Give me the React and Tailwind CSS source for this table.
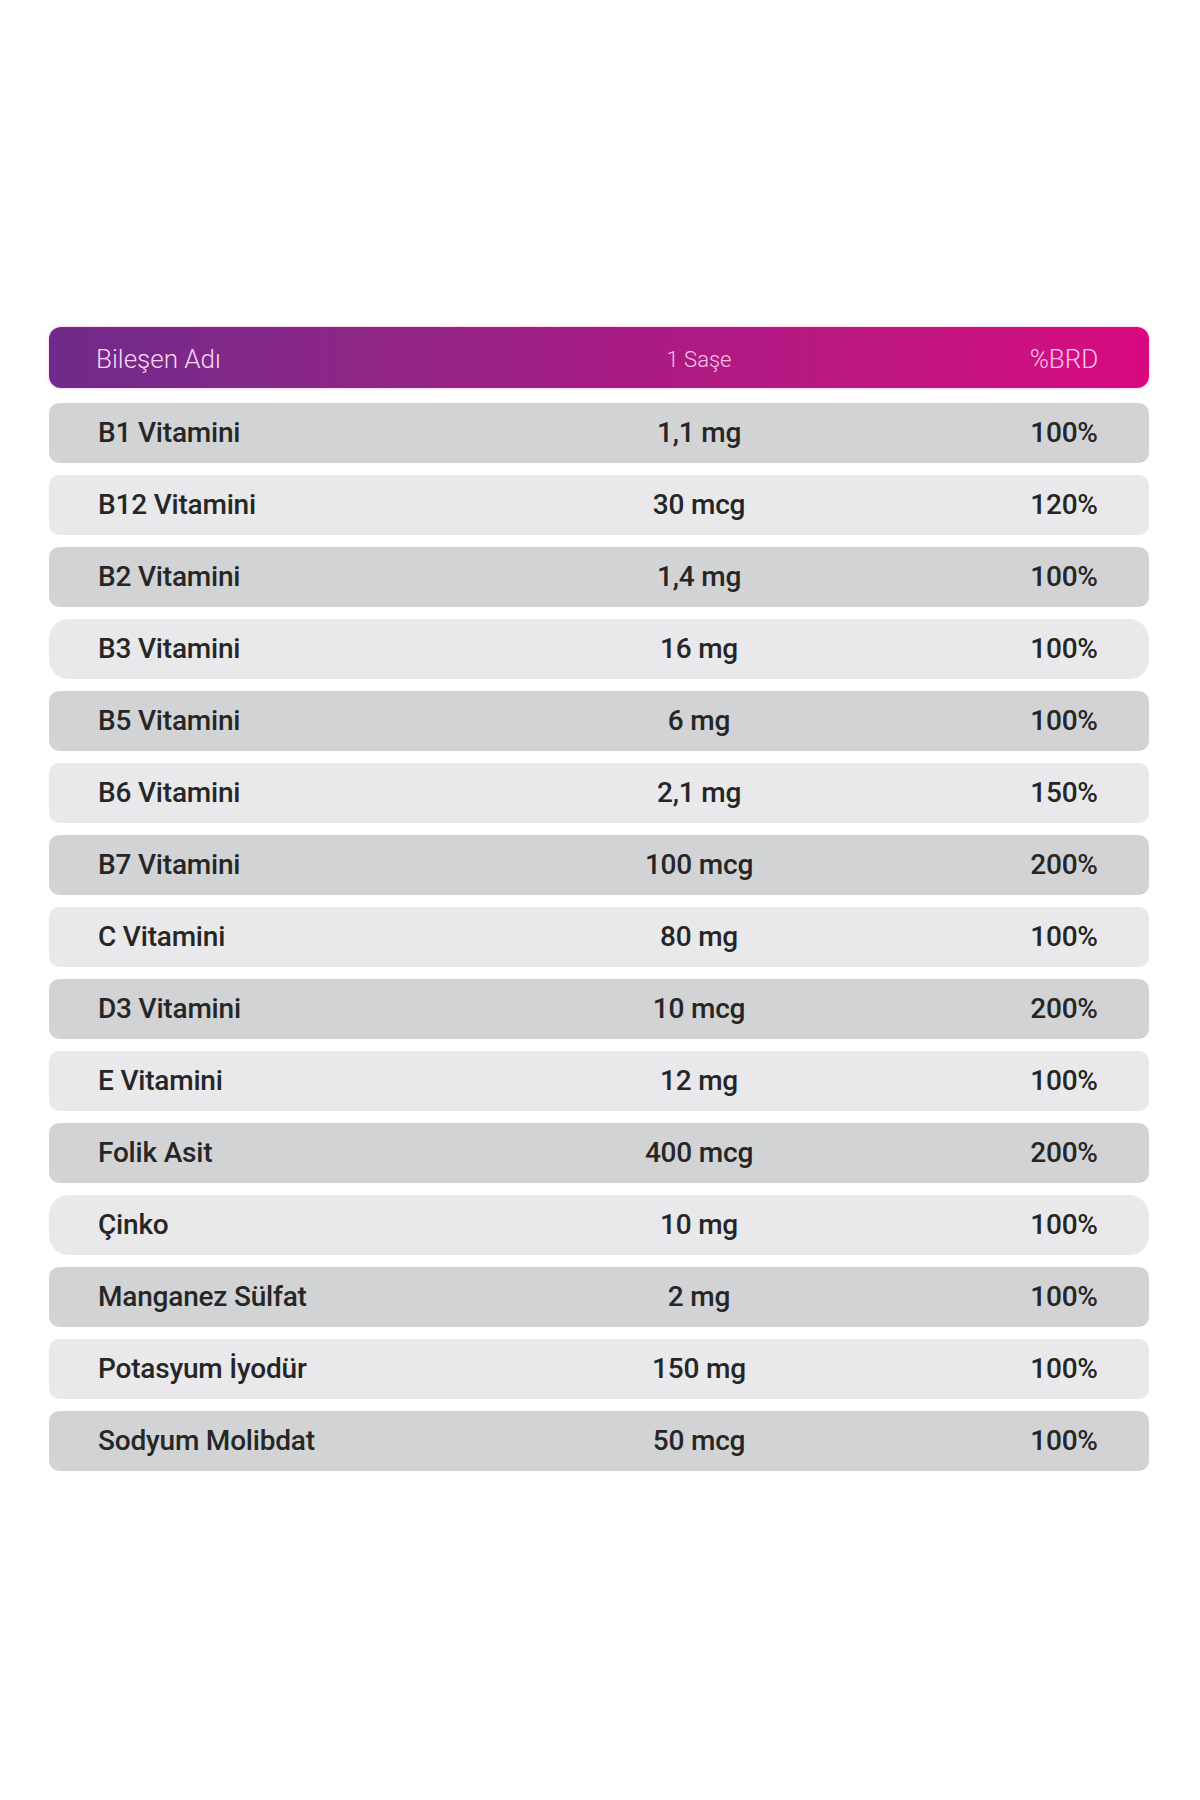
import React from "react";

const rows = [
  ["B1 Vitamini", "1,1 mg", "100%"],
  ["B12 Vitamini", "30 mcg", "120%"],
  ["B2 Vitamini", "1,4 mg", "100%"],
  ["B3 Vitamini", "16 mg", "100%"],
  ["B5 Vitamini", "6 mg", "100%"],
  ["B6 Vitamini", "2,1 mg", "150%"],
  ["B7 Vitamini", "100 mcg", "200%"],
  ["C Vitamini", "80 mg", "100%"],
  ["D3 Vitamini", "10 mcg", "200%"],
  ["E Vitamini", "12 mg", "100%"],
  ["Folik Asit", "400 mcg", "200%"],
  ["Çinko", "10 mg", "100%"],
  ["Manganez Sülfat", "2 mg", "100%"],
  ["Potasyum İyodür", "150 mg", "100%"],
  ["Sodyum Molibdat", "50 mcg", "100%"],
];

export default function App() {
  return (
    <div
      className="w-[1200px] h-[1800px] bg-white pt-[327px] pl-[49px]"
      style={{ fontFamily: "Roboto, 'Liberation Sans', sans-serif" }}
    >
      <div className="w-[1100px] flex flex-col gap-3">
        <div className="h-[61px] mb-[3px] pt-[4px] rounded-xl grid grid-cols-[370px_560px_170px] items-center bg-gradient-to-r from-[#6f2a8b] via-[#a51b83] to-[#d8087f] shadow-[0_0_3px_rgba(230,120,200,0.6)]">
          <div className="pl-[47px] text-[26px] font-light text-[#f6d9f3]">Bileşen Adı</div>
          <div className="text-center text-[22px] font-light text-[#f9c3e6]">1 Saşe</div>
          <div className="text-center text-[26px] font-light text-[#fbc6e8]">%BRD</div>
        </div>
        {rows.map((r, i) => (
          <div
            key={r[0]}
            className={
              "h-[60px] grid grid-cols-[370px_560px_170px] items-center text-[28px] font-medium text-[#262626] tracking-[-0.2px] " +
              (i % 2 === 0
                ? "bg-[#d2d3d5] rounded-[10px]"
                : i === 3 || i === 11
                ? "bg-[#e9e9eb] rounded-[20px]"
                : "bg-[#e9e9eb] rounded-[10px]")
            }
          >
            <div className="pl-[49px]">{r[0]}</div>
            <div className="text-center">{r[1]}</div>
            <div className="text-center">{r[2]}</div>
          </div>
        ))}
      </div>
    </div>
  );
}
